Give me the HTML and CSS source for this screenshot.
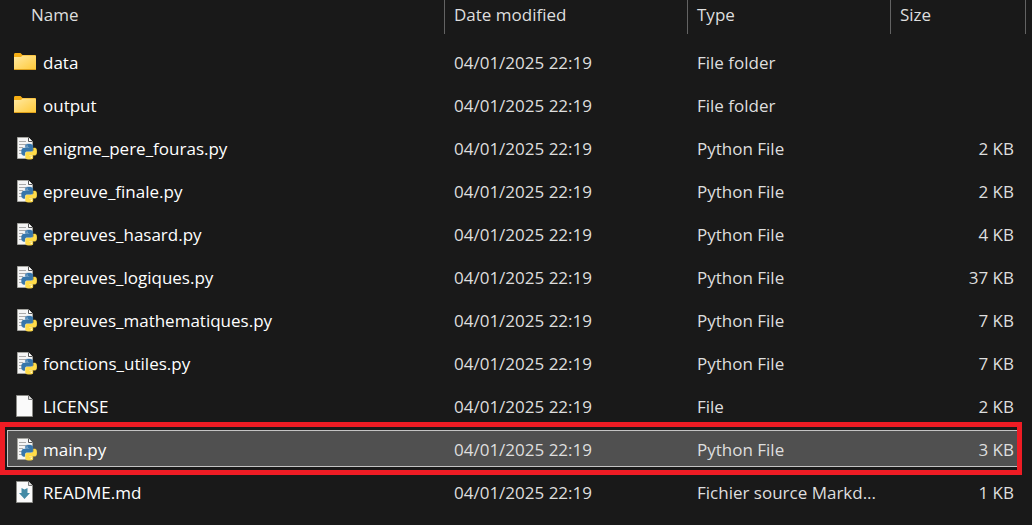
FILE: index.html
```
<!DOCTYPE html>
<html lang="en">
<head>
<meta charset="utf-8">
<title>Files</title>
<link rel="stylesheet" href="styles.css">
</head>
<body>
<svg class="defs" aria-hidden="true">
  <defs>
    <linearGradient id="fold" x1="0" y1="0" x2="1" y2="1">
      <stop offset="0" stop-color="#ffe9a2"/><stop offset="1" stop-color="#ffc937"/>
    </linearGradient>
    <symbol id="folder" viewBox="0 0 24 24">
      <path d="M1 4.500q0-1.500 1-1.500h5.500l2 2H22q1 0 1 1v13H1z" fill="#f5ae14"/>
      <path d="M1 7h7l1.500-1.500H22q1 0 1 1V19q0 .5-.5.500h-21Q1 19.500 1 19z" fill="url(#fold)"/>
      <path d="M1 19.500h22" stroke="#dfa11b" stroke-width="1"/>
    </symbol>
    <symbol id="page" viewBox="0 0 24 24">
      <path d="M3.500 1.500h12l4 4v17h-16z" fill="#fafafa" stroke="#8c8c88"/>
      <path d="M15.500 1.500v4h4" fill="#ddd" stroke="#777"/>
    </symbol>
    <path id="snake" d="M14.25.18l.9.2.73.26.59.3.45.32.34.34.25.34.16.33.1.3.04.26.02.2-.01.13V8.5l-.05.63-.13.55-.21.46-.26.38-.3.31-.33.25-.35.19-.35.14-.33.1-.3.07-.26.04-.21.02H8.77l-.69.05-.59.14-.5.22-.41.27-.33.32-.27.35-.2.36-.15.37-.1.35-.07.32-.04.27-.02.21v3.06H3.17l-.21-.03-.28-.07-.32-.12-.35-.18-.36-.26-.36-.36-.35-.46-.32-.59-.28-.73-.21-.88-.14-1.05-.05-1.23.06-1.22.16-1.04.24-.87.32-.71.36-.57.4-.44.42-.33.42-.24.4-.16.36-.1.32-.05.24-.01h.16l.06.01h8.16v-.83H6.18l-.01-2.75-.02-.37.05-.34.11-.31.17-.28.25-.26.31-.23.38-.2.44-.18.51-.15.58-.12.64-.1.71-.06.77-.04.84-.02 1.27.05z"/>
    <symbol id="python" viewBox="0 0 24 24">
      <path d="M4.500 1.500h11l4 4v17h-15z" fill="#f5f5f5" stroke="#a5a5a0"/>
      <path d="M15.500 1.500v4h4" fill="#fff" stroke="#555"/>
      <path d="M6 5.500h7M6 8.500h7M6 11.500h4M6 14.500h3M6 17.500h4" stroke="#aaa"/>
      <g transform="translate(8.500 8) scale(.64)">
        <use href="#snake" fill="#3776ab" stroke="#3776ab" stroke-width=".6"/>
        <use href="#snake" fill="#ffdc4a" stroke="#ffdc4a" stroke-width=".6" transform="rotate(180 12 12)"/>
        <circle cx="8.700" cy="3.300" r="1" fill="#cfe0ee"/><circle cx="15.300" cy="20.700" r="1" fill="#fff"/>
      </g>
    </symbol>
    <symbol id="markdown" viewBox="0 0 24 24">
      <use href="#page"/>
      <path d="M8.500 8l3 1.500 3-1.500v5h2.500l-5.500 6-5.500-6h2.500z" fill="#438aa5"/>
    </symbol>
  </defs>
</svg>
<table class="files">
  <colgroup><col><col class="c-date"><col class="c-type"><col class="c-size"><col class="c-end"></colgroup>
  <thead>
    <tr><th class="first"><button>Name</button></th><th><button>Date modified</button></th><th><button>Type</button></th><th><button>Size</button></th><th></th></tr>
  </thead>
  <tbody>
    <tr><td class="name"><svg class="icon"><use href="#folder"/></svg>data</td><td>04/01/2025 22:19</td><td>File folder</td><td class="size"></td><td></td></tr>
    <tr><td class="name"><svg class="icon"><use href="#folder"/></svg>output</td><td>04/01/2025 22:19</td><td>File folder</td><td class="size"></td><td></td></tr>
    <tr><td class="name"><svg class="icon"><use href="#python"/></svg>enigme_pere_fouras.py</td><td>04/01/2025 22:19</td><td>Python File</td><td class="size">2 KB</td><td></td></tr>
    <tr><td class="name"><svg class="icon"><use href="#python"/></svg>epreuve_finale.py</td><td>04/01/2025 22:19</td><td>Python File</td><td class="size">2 KB</td><td></td></tr>
    <tr><td class="name"><svg class="icon"><use href="#python"/></svg>epreuves_hasard.py</td><td>04/01/2025 22:19</td><td>Python File</td><td class="size">4 KB</td><td></td></tr>
    <tr><td class="name"><svg class="icon"><use href="#python"/></svg>epreuves_logiques.py</td><td>04/01/2025 22:19</td><td>Python File</td><td class="size">37 KB</td><td></td></tr>
    <tr><td class="name"><svg class="icon"><use href="#python"/></svg>epreuves_mathematiques.py</td><td>04/01/2025 22:19</td><td>Python File</td><td class="size">7 KB</td><td></td></tr>
    <tr><td class="name"><svg class="icon"><use href="#python"/></svg>fonctions_utiles.py</td><td>04/01/2025 22:19</td><td>Python File</td><td class="size">7 KB</td><td></td></tr>
    <tr><td class="name"><svg class="icon"><use href="#page"/></svg>LICENSE</td><td>04/01/2025 22:19</td><td>File</td><td class="size">2 KB</td><td></td></tr>
    <tr class="selected"><td class="name"><svg class="icon"><use href="#python"/></svg>main.py</td><td>04/01/2025 22:19</td><td>Python File</td><td class="size">3 KB</td><td></td></tr>
    <tr><td class="name"><svg class="icon"><use href="#markdown"/></svg>README.md</td><td>04/01/2025 22:19</td><td>Fichier source Markd...</td><td class="size">1 KB</td><td></td></tr>
  </tbody>
</table>
</body>
</html>
```
FILE: styles.css
```
body {
  margin: 0;
  background: #191919;
  color: #dedede;
  font: 17px/24px "Open Sans", "Noto Sans", sans-serif;
  overflow: hidden;
}
.defs { position: absolute; width: 0; height: 0; }
.files {
  width: 100%;
  table-layout: fixed;
  border-collapse: separate;
  border-spacing: 0;
}
.c-date { width: 243px; }
.c-type { width: 203px; }
.c-size { width: 135px; }
.c-end { width: 7px; }
th {
  height: 42px;
  padding: 0;
  text-align: left;
  vertical-align: top;
  font-weight: 400;
  background: linear-gradient(#636363, #636363) left top / 1px 34px no-repeat;
}
th.first { background: none; }
th button {
  display: block;
  width: 100%;
  padding: 3px 10px;
  border: 0;
  background: none;
  color: inherit;
  font: inherit;
  text-align: left;
}
th.first button { padding-left: 31px; }
td {
  height: 41px;
  padding: 0 0 2px 10px;
  white-space: nowrap;
}
.name { padding-left: 13px; color: #fff; }
.size { padding: 0 11px 2px 0; text-align: right; }
.icon {
  width: 24px;
  height: 24px;
  margin-right: 6px;
  vertical-align: -5px;
}
.selected { position: relative; z-index: 0; }
.selected .name::before {
  content: "";
  position: absolute;
  z-index: -1;
  inset: 1px 12px 5px 7px;
  border: 1px solid #c4c4c4;
  background: #505050;
}
.selected .name::after {
  content: "";
  position: absolute;
  inset: -7px 10px -3px 0;
  border: 5px solid #ee1c24;
  pointer-events: none;
}
```
